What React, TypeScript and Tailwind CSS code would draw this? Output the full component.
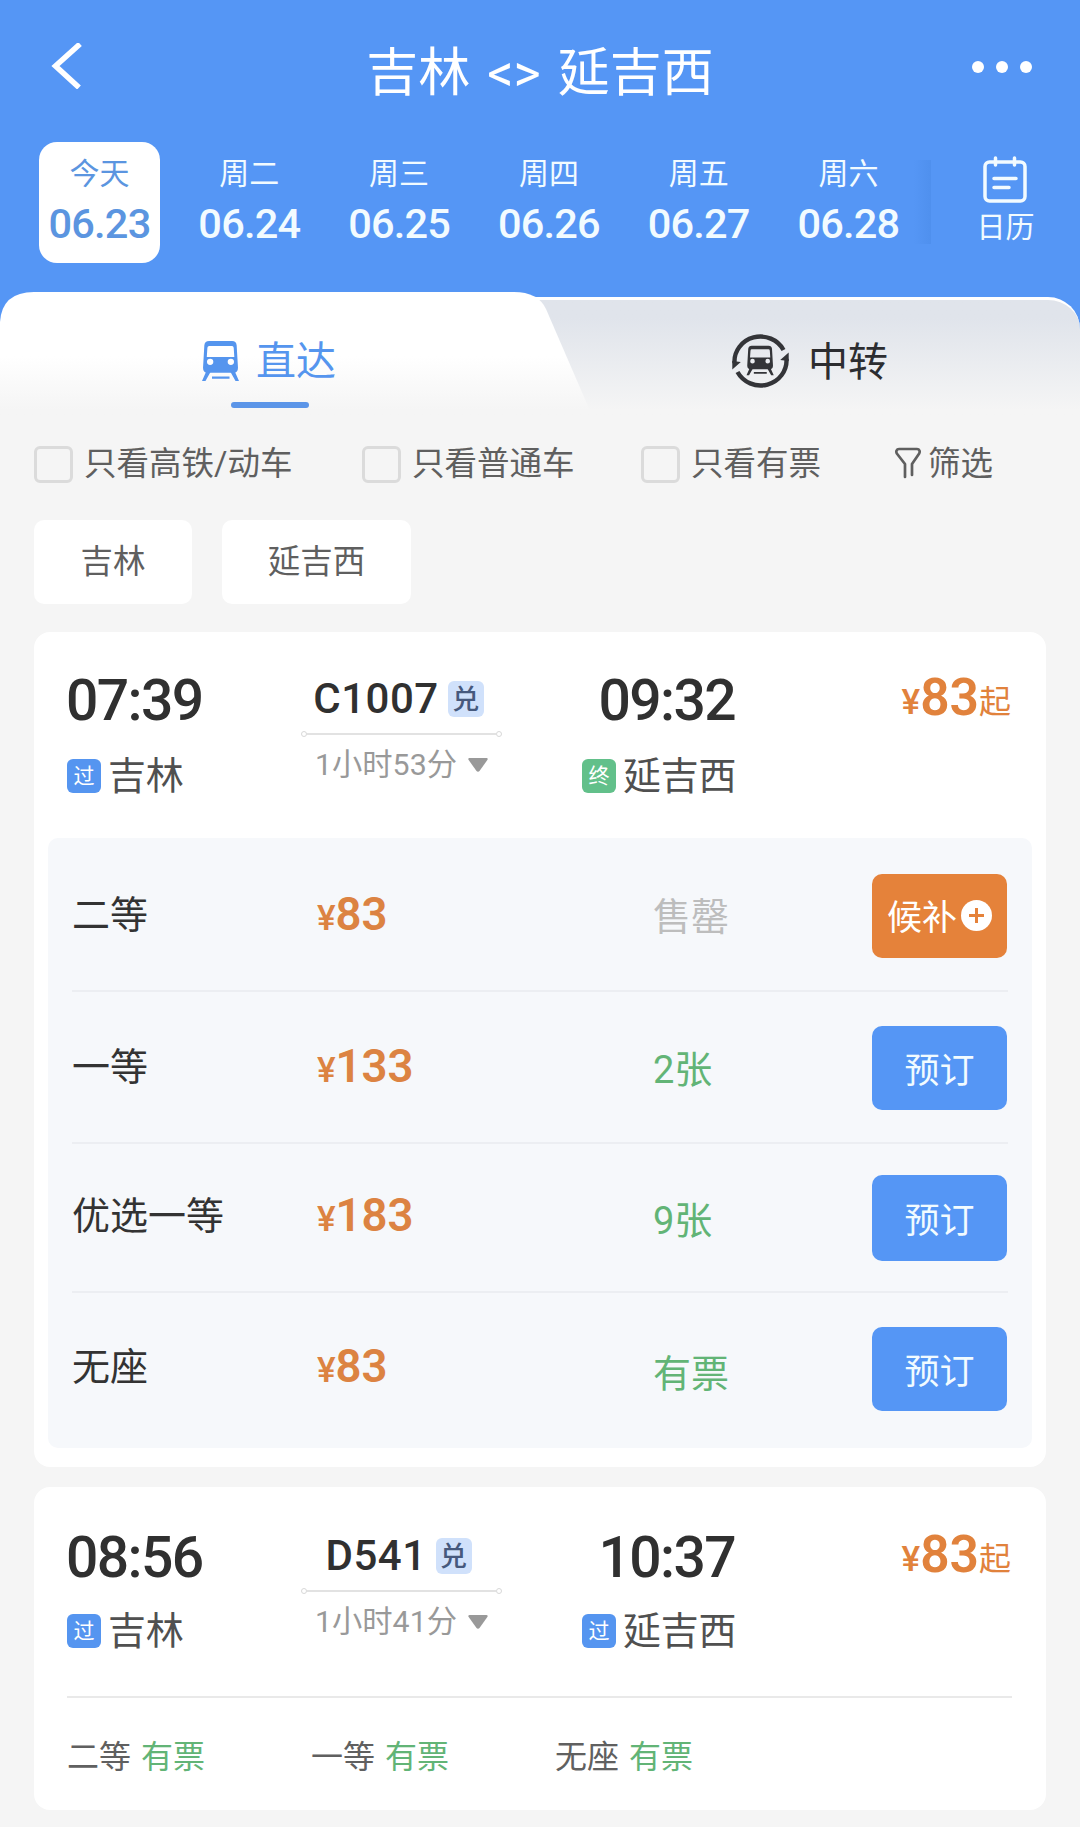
import React from 'react'
import { clsx } from 'clsx'

// ─────────────────────────────────────────────────────────────────────────────
// TYPES
// ─────────────────────────────────────────────────────────────────────────────

interface SeatRowData {
  name: string
  price: number
  status: string
  soldOut?: boolean
  rowClass: string
  labelClass?: string
  buttonClass: string
}

interface TrainData {
  depart: string
  arrive: string
  code: string
  duration: string
  from: string
  to: string
  toTag: string
  price: number
}

// ─────────────────────────────────────────────────────────────────────────────
// DATA
// ─────────────────────────────────────────────────────────────────────────────

const days = [
  { week: '今天', date: '06.23' },
  { week: '周二', date: '06.24' },
  { week: '周三', date: '06.25' },
  { week: '周四', date: '06.26' },
  { week: '周五', date: '06.27' },
  { week: '周六', date: '06.28' },
]

const seats: SeatRowData[] = [
  { name: '二等', price: 83, status: '售罄', soldOut: true, rowClass: 'h-[154px]', labelClass: 'pt-px', buttonClass: 'h-[84px] mt-[3px]' },
  { name: '一等', price: 133, status: '2张', rowClass: 'h-[152px]', labelClass: 'pb-px', buttonClass: 'h-[84px] mt-[2px]' },
  { name: '优选一等', price: 183, status: '9张', rowClass: 'h-[149px]', labelClass: 'pb-[4px]', buttonClass: 'h-[86px]' },
  { name: '无座', price: 83, status: '有票', rowClass: 'h-[155px]', labelClass: 'pb-[7px]', buttonClass: 'h-[84px] -mt-[3px]' },
]

const trains: TrainData[] = [
  { depart: '07:39', arrive: '09:32', code: 'C1007', duration: '1小时53分', from: '吉林', to: '延吉西', toTag: '终', price: 83 },
  { depart: '08:56', arrive: '10:37', code: 'D541', duration: '1小时41分', from: '吉林', to: '延吉西', toTag: '过', price: 83 },
]

// ─────────────────────────────────────────────────────────────────────────────
// ICONS
// ─────────────────────────────────────────────────────────────────────────────

function TrainShape() {
  return (
    <>
      <path
        fillRule="evenodd"
        d="M7 0H29.500Q33.500 0 34 4L35.300 26Q35.300 31 31 31H5.500Q1 31 1 26L2.300 4Q2.800 0 7 0ZM7 4.800Q5.500 4.800 5.300 6.500L4.700 15.500H31.700L31.100 6.500Q30.900 4.800 29.500 4.800ZM8 17.200a3.100 3.100 0 1 0 0 6.200 3.100 3.100 0 0 0 0-6.200zM28.300 17.200a3.100 3.100 0 1 0 0 6.200 3.100 3.100 0 0 0 0-6.200z"
      />
      <path d="M4 30h4.500L3.400 39H0zM32.300 30h-4.500L32.900 39H36.300zM9.800 34.700h17.200v2.200H9.800z" />
    </>
  )
}

function TransferIcon() {
  return (
    <svg width="57" height="55" viewBox="0 0 57 55" fill="none" className="text-[#333438]">
      <path d="M2.500 29A26 25 0 0 1 51.500 16" stroke="currentColor" strokeWidth="4.400" />
      <path d="M54.500 25A26 25 0 0 1 5.500 38" stroke="currentColor" strokeWidth="4.400" />
      <path d="M.3 35.500V27l8.500 1zM56.700 18.500V27l-8.500-1z" fill="currentColor" />
      <g transform="translate(14.500 11.700) scale(.75 .76)" fill="currentColor">
        <TrainShape />
      </g>
    </svg>
  )
}

function CalendarIcon() {
  return (
    <svg width="44" height="47" viewBox="0 0 44 47" fill="none" stroke="#f2fbff" strokeWidth="3.500" strokeLinecap="round">
      <rect x="2" y="6" width="40" height="39" rx="4.500" />
      <path d="M12.500 2v7M31.500 2v7M11 22.500h22M11 31.500h15" />
    </svg>
  )
}

// ─────────────────────────────────────────────────────────────────────────────
// HEADER
// ─────────────────────────────────────────────────────────────────────────────

function Header() {
  return (
    <header className="grid h-[142px] grid-cols-[1fr_auto_1fr] items-center px-[51px] text-white">
      <svg width="32" height="46" viewBox="0 0 32 46" fill="none" className="mb-[10px]">
        <path d="M29 1L4.500 23l23.500 21.500" stroke="#fff" strokeWidth="5.500" />
      </svg>
      <h1 className="pt-[5px] text-[52px] leading-none [word-spacing:4px]">吉林 &lt;&gt; 延吉西</h1>
      <div className="mb-[9px] -mr-[3px] flex justify-end gap-3">
        <i className="size-3 rounded-full bg-white" />
        <i className="size-3 rounded-full bg-white" />
        <i className="size-3 rounded-full bg-white" />
      </div>
    </header>
  )
}

function DateStrip() {
  return (
    <div className="flex h-[121px] pl-[39px] text-[#f2fbff]">
      <div className="flex gap-[28.800px]">
        {days.map((day, index) => (
          <button
            key={day.date}
            className={clsx(
              'flex w-[121px] flex-col items-center rounded-[18px] pt-[17px]',
              index === 0 && 'bg-white text-[#5b95e0]'
            )}
          >
            <span className="text-[30px] leading-[30px]">{day.week}</span>
            <span className="mt-[14px] text-[41.500px] leading-[41px] font-medium tracking-[-0.8px]">{day.date}</span>
          </button>
        ))}
      </div>
      <div className="mt-[18px] ml-[5px] h-[84px] w-[17px] bg-linear-to-r from-[#5596f5] to-[#4f90ee]" />
      <button className="flex flex-1 flex-col items-center pt-[14px] pr-px">
        <CalendarIcon />
        <span className="mt-[11px] pl-px text-[29px] leading-[29px]">日历</span>
      </button>
    </div>
  )
}

// ─────────────────────────────────────────────────────────────────────────────
// TABS
// ─────────────────────────────────────────────────────────────────────────────

function RouteTabs() {
  return (
    <div className="mt-[29px] flex h-[128px]">
      <button className="relative z-10 -mr-[90px] flex w-[600px] flex-col bg-linear-to-b from-white from-50% to-[#f5f5f5] to-92% pt-[49px] pl-[202px] [clip-path:path('M0_30Q2_0_34_0H514Q538_0_546_17L594_128H0Z')]">
        <span className="flex items-start gap-[17px] text-[#5595ee]">
          <svg width="37" height="40" viewBox="0 0 36.300 39" fill="currentColor">
            <TrainShape />
          </svg>
          <span className="pt-px text-[40px] leading-10">直达</span>
        </span>
        <i className="mt-[20px] ml-[29px] h-[6px] w-[78px] rounded-full bg-[#5b95e8]" />
      </button>
      <button className="mt-[5px] flex flex-1 items-start gap-[19px] rounded-tr-[32px] border-t-[3px] border-white bg-linear-to-b from-[#e0e4eb] from-15% to-[#f5f5f5] to-92% pt-[34px] pl-[222px] text-[#2c2d30]">
        <TransferIcon />
        <span className="mt-[9px] text-[40px] leading-10">中转</span>
      </button>
    </div>
  )
}

// ─────────────────────────────────────────────────────────────────────────────
// FILTERS
// ─────────────────────────────────────────────────────────────────────────────

interface CheckFilterProps {
  label: string
  className?: string
}

function CheckFilter({ label, className }: CheckFilterProps) {
  return (
    <label className={clsx('flex items-center gap-[11px]', className)}>
      <i className="h-[37px] w-[39px] rounded-md border-3 border-[#dbdbdb]" />
      <span>{label}</span>
    </label>
  )
}

function Filters() {
  return (
    <section className="px-[34px] text-[#5f5f5f]">
      <div className="flex h-[88px] items-center text-[32.500px] leading-8">
        <CheckFilter label="只看高铁/动车" className="w-[328px]" />
        <CheckFilter label="只看普通车" className="w-[279px]" />
        <CheckFilter label="只看有票" className="w-[254px]" />
        <button className="flex items-center gap-[7px]">
          <svg width="26" height="32" viewBox="0 0 26 32" fill="none" stroke="currentColor" strokeWidth="2.700" strokeLinejoin="round" strokeLinecap="round" className="mb-[2px]">
            <path d="M10 30V17L1.800 6.500C.8 4.500 1.500 2 4 2h18c2.500 0 3.200 2.500 2.200 4.500L17 17v11" />
          </svg>
          <span>筛选</span>
        </button>
      </div>
      <div className="mt-[12px] flex gap-[30px] text-[32.500px]">
        <button className="h-[84px] w-[158px] rounded-[10px] bg-white">吉林</button>
        <button className="h-[84px] w-[189px] rounded-[10px] bg-white">延吉西</button>
      </div>
    </section>
  )
}

// ─────────────────────────────────────────────────────────────────────────────
// TRAIN SUMMARY
// ─────────────────────────────────────────────────────────────────────────────

function Station({ tag, name }: { tag: string; name: string }) {
  return (
    <div className="flex items-center gap-[7px]">
      <span
        className={clsx(
          'flex size-[34px] shrink-0 items-center justify-center rounded-md pt-px text-[21px] leading-none text-white',
          tag === '终' ? 'bg-[#62c08a]' : 'bg-[#5595f0]'
        )}
      >
        {tag}
      </span>
      <span className="pt-px text-[38px] leading-[38px] tracking-[-0.3px] whitespace-nowrap text-[#505050]">{name}</span>
    </div>
  )
}

interface TrainSummaryProps {
  train: TrainData
  stationClass: string
}

function TrainSummary({ train, stationClass }: TrainSummaryProps) {
  return (
    <div className="flex pl-[33px] text-[#303030]">
      <div className="w-[234px]">
        <div className="-ml-px pt-px text-[57px] leading-[57px] font-medium tracking-[-1.6px]">{train.depart}</div>
        <div className={stationClass}>
          <Station tag="过" name={train.from} />
        </div>
      </div>

      <div className="flex w-[201px] flex-col items-center">
        <div className="mt-[7px] flex items-center gap-[9px] pr-1.5">
          <span className="text-[42px] leading-[42px] font-medium tracking-[0.5px]">{train.code}</span>
          <span className="flex size-9 items-center justify-center rounded-md bg-[#d0e1fb] pt-[2px] text-[27px] leading-none font-medium text-[#46597d]">
            兑
          </span>
        </div>
        <div className="mt-[11px] flex w-full items-center">
          <i className="size-[6px] rounded-full border-[1.500px] border-[#d8d8d8]" />
          <i className="h-[2px] flex-1 bg-[#e2e2e2]" />
          <i className="size-[6px] rounded-full border-[1.500px] border-[#d8d8d8]" />
        </div>
        <div className="mt-[13px] flex items-center gap-[11px] text-[30.300px] leading-[30px] text-[#999]">
          <span>{train.duration}</span>
          <svg width="20" height="14" viewBox="0 0 20 14" fill="currentColor">
            <path d="M1.500 0h17c1 0 1.500 1 1 1.800l-8 11.200c-.8 1-2.200 1-3 0L.5 1.800C0 1 .5 0 1.500 0z" />
          </svg>
        </div>
      </div>

      <div className="ml-[80px] w-[154px]">
        <div className="mr-px pt-px text-right text-[57px] leading-[57px] font-medium tracking-[-1.6px]">{train.arrive}</div>
        <div className={stationClass}>
          <Station tag={train.toTag} name={train.to} />
        </div>
      </div>

      <div className="flex flex-1 items-baseline justify-end pr-[35px] leading-[54px] text-[#e1823c]">
        <span className="-translate-y-px text-[35px] font-medium">¥</span>
        <span className="text-[51.500px] font-semibold">{train.price}</span>
        <span className="-translate-y-[2px] text-[32px]">起</span>
      </div>
    </div>
  )
}

// ─────────────────────────────────────────────────────────────────────────────
// SEATS
// ─────────────────────────────────────────────────────────────────────────────

function SeatRow({ seat }: { seat: SeatRowData }) {
  return (
    <div
      className={clsx(
        'grid grid-cols-[245px_336px_219px_135px] items-center border-[#eceef2] not-last:border-b-2',
        seat.rowClass
      )}
    >
      <span className={clsx('text-[38px] leading-none text-[#333]', seat.labelClass)}>{seat.name}</span>
      <span className={clsx('flex items-baseline leading-none font-semibold text-[#dc8342]', seat.labelClass)}>
        <span className="text-[35px] font-medium">¥</span>
        <span className="text-[45.500px]">{seat.price}</span>
      </span>
      <span className={clsx('pt-[6px] text-[38px] leading-none', seat.soldOut ? 'text-[#bdbdbd]' : 'text-[#62b476]')}>
        {seat.status}
      </span>
      {seat.soldOut ? (
        <button className={clsx('flex items-center justify-center gap-[4px] rounded-[10px] bg-[#e5823a] text-[35px] leading-none text-white', seat.buttonClass)}>
          <span className="pt-[6px]">候补</span>
          <svg width="31" height="31" viewBox="0 0 31 31">
            <circle cx="15.500" cy="15.500" r="15.500" fill="#fff" />
            <path d="M15.500 8v15M8 15.500h15" stroke="#e5823a" strokeWidth="3" />
          </svg>
        </button>
      ) : (
        <button className={clsx('rounded-[10px] bg-[#5596f5] pt-[7px] text-[35px] leading-none text-[#f2fbff]', seat.buttonClass)}>
          预订
        </button>
      )}
    </div>
  )
}

function SeatBrief({ name, status }: { name: string; status: string }) {
  return (
    <span className="flex w-[244px] gap-[10px]">
      <span className="text-[#606060]">{name}</span>
      <span className="text-[#62b476]">{status}</span>
    </span>
  )
}

// ─────────────────────────────────────────────────────────────────────────────
// PAGE
// ─────────────────────────────────────────────────────────────────────────────

export default function App() {
  return (
    <div className="h-[1827px] w-[1080px] overflow-hidden bg-[#f5f5f5] [font-family:Roboto,'Noto_Sans_CJK_SC',sans-serif]">
      <div className="bg-[#5596f5]">
        <Header />
        <DateStrip />
        <RouteTabs />
      </div>
      <Filters />

      <main className="mt-[28px] px-[34px]">
        {/* Expanded train */}
        <article className="h-[835px] rounded-[16px] bg-white pt-[39px]">
          <div className="h-[167px]">
            <TrainSummary train={trains[0]} stationClass="mt-[27px]" />
          </div>
          <div className="mx-[14px] rounded-[10px] bg-[#f6f8fb] px-6">
            {seats.map(seat => (
              <SeatRow key={seat.name} seat={seat} />
            ))}
          </div>
        </article>

        {/* Collapsed train */}
        <article className="mt-5 h-[323px] rounded-[16px] bg-white pt-[41px]">
          <div className="h-[168px]">
            <TrainSummary train={trains[1]} stationClass="mt-[25px]" />
          </div>
          <div className="ml-[33px] mr-[34px] flex border-t-2 border-[#e9e9e9] pt-[43px] text-[32px] leading-8">
            <SeatBrief name="二等" status="有票" />
            <SeatBrief name="一等" status="有票" />
            <SeatBrief name="无座" status="有票" />
          </div>
        </article>
      </main>
    </div>
  )
}
